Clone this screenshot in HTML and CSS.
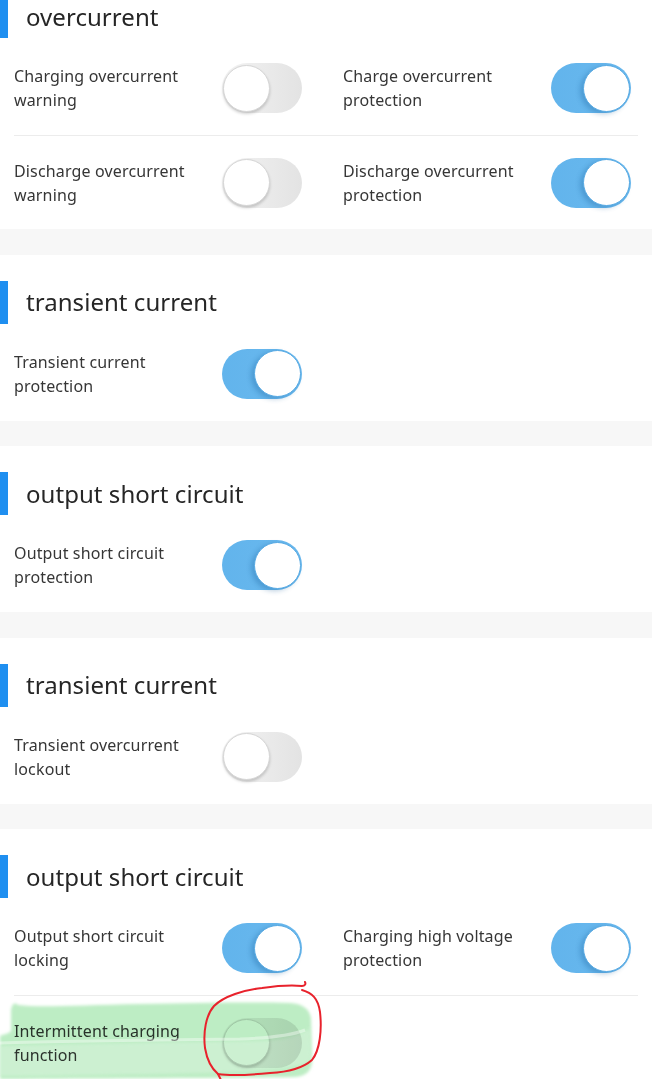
FILE: index.html
```html
<!DOCTYPE html>
<html lang="en">
<head>
<meta charset="utf-8">
<title>Protection settings</title>
<link rel="stylesheet" href="styles.css">
</head>
<body>
<main class="page">
  <section class="section">
    <div class="head"><span class="bar"></span><h2 class="title">overcurrent</h2></div>
    <div class="row">
      <div class="cell"><span class="label">Charging overcurrent warning</span><span class="switch off"><span class="knob"></span></span></div>
      <div class="cell"><span class="label">Charge overcurrent protection</span><span class="switch on"><span class="knob"></span></span></div>
    </div>
    <div class="row">
      <div class="cell"><span class="label">Discharge overcurrent warning</span><span class="switch off"><span class="knob"></span></span></div>
      <div class="cell"><span class="label">Discharge overcurrent protection</span><span class="switch on"><span class="knob"></span></span></div>
    </div>
  </section>

  <section class="section">
    <div class="head"><span class="bar"></span><h2 class="title">transient current</h2></div>
    <div class="row">
      <div class="cell"><span class="label">Transient current protection</span><span class="switch on"><span class="knob"></span></span></div>
    </div>
  </section>

  <section class="section">
    <div class="head"><span class="bar"></span><h2 class="title">output short circuit</h2></div>
    <div class="row">
      <div class="cell"><span class="label">Output short circuit protection</span><span class="switch on"><span class="knob"></span></span></div>
    </div>
  </section>

  <section class="section">
    <div class="head"><span class="bar"></span><h2 class="title">transient current</h2></div>
    <div class="row">
      <div class="cell"><span class="label">Transient overcurrent lockout</span><span class="switch off"><span class="knob"></span></span></div>
    </div>
  </section>

  <section class="section">
    <div class="head"><span class="bar"></span><h2 class="title">output short circuit</h2></div>
    <div class="row">
      <div class="cell"><span class="label">Output short circuit locking</span><span class="switch on"><span class="knob"></span></span></div>
      <div class="cell"><span class="label">Charging high voltage protection</span><span class="switch on"><span class="knob"></span></span></div>
    </div>
    <div class="row">
      <div class="cell"><span class="label">Intermittent charging function</span><span class="switch off"><span class="knob"></span></span></div>
    </div>
  </section>
</main>

<svg class="annot highlight" width="652" height="1079" viewBox="0 0 652 1079" aria-hidden="true">
  <defs>
    <filter id="soft" x="-5%" y="-20%" width="110%" height="140%">
      <feGaussianBlur stdDeviation="1.6"/>
    </filter>
  </defs>
  <path class="marker" filter="url(#soft)" d="M0 1079 L0 1036 C4 1034 9 1034 11 1031 L11 1010 C12 1004 14 1002 18 1005 C40 1008 80 1005 140 1004 C200 1003 250 1002 290 1003 C302 1004 309 1008 311 1018 L312 1062 C311 1072 305 1076 295 1077 C230 1078 120 1078 0 1079 Z"/>
  <path class="marker2" filter="url(#soft)" d="M0 1046 C80 1044 180 1042 260 1041 C285 1040 300 1036 310 1028 L311 1060 C300 1070 250 1072 150 1074 C80 1075 30 1076 0 1076 Z"/>
</svg>
<svg class="annot" width="652" height="1079" viewBox="0 0 652 1079" aria-hidden="true">
  <path class="streak" d="M0 1043 C60 1041 150 1040 240 1039 C270 1038 290 1036 305 1030"/>
  <path class="ring" d="M302 990 C312 993 318 998 320 1012 C322 1030 320 1050 312 1060 C303 1068 290 1072 270 1073 C250 1075 230 1076 218 1074 C211 1068 207 1060 205 1048 C203 1032 206 1015 214 1006 C224 996 244 990 262 988 C276 986 292 985 302 986 C305 986 306 984 305 982"/>
  <path class="ring" d="M218 1074 C219 1076 220 1078 221 1080"/>
</svg>
</body>
</html>
```

FILE: styles.css
```css
* {
  box-sizing: border-box;
}

html, body {
  margin: 0;
  padding: 0;
}

body {
  position: relative;
  width: 652px;
  height: 1079px;
  overflow: hidden;
  background: #f7f7f7;
  font-family: "Noto Sans", "Liberation Sans", sans-serif;
  color: #333333;
}

.page {
  margin-top: -31px;
}

.section {
  background: #ffffff;
  margin-bottom: 25.5px;
}

.head {
  display: flex;
  align-items: center;
  padding-top: 26px;
  padding-bottom: 3px;
}

.bar {
  display: block;
  width: 8px;
  height: 43px;
  background: #1f8ff0;
  flex: none;
}

.title {
  margin: 0 0 0 18px;
  font-size: 24px;
  font-weight: 400;
  line-height: 32px;
  color: #262626;
  letter-spacing: 0.05px;
}

.row {
  display: grid;
  grid-template-columns: 329px 1fr;
  height: 94px;
  margin: 0 14px;
}

.row + .row {
  border-top: 1px solid #ececec;
}

.cell {
  display: flex;
  align-items: center;
}

.label {
  width: 208px;
  flex: none;
  font-size: 16px;
  line-height: 24px;
  letter-spacing: 0.15px;
  color: #363636;
}

.switch {
  display: flex;
  align-items: center;
  width: 80px;
  height: 50px;
  border-radius: 25px;
  padding: 1px;
  flex: none;
}

.switch.off {
  justify-content: flex-start;
  background: linear-gradient(to right, #f3f3f3, #e3e3e3);
}

.switch.on {
  justify-content: flex-end;
  background: linear-gradient(to right, #62b4ec, #6ab9ee);
}

.knob {
  display: block;
  width: 47px;
  height: 47px;
  border-radius: 50%;
  background: #ffffff;
}

.switch.off .knob {
  border: 1px solid #d6d6d6;
  box-shadow: 0 2px 3px rgba(0, 0, 0, 0.18);
}

.switch.on .knob {
  border: 1px solid #56a9e3;
  box-shadow: -3px 2px 5px rgba(20, 90, 150, 0.3);
}

.annot {
  position: absolute;
  top: 0;
  left: 0;
  pointer-events: none;
}

.highlight {
  mix-blend-mode: multiply;
}

.marker {
  fill: #bdedc4;
}

.marker2 {
  fill: #d6f3da;
  opacity: 0.6;
}

.streak {
  fill: none;
  stroke: rgba(255, 255, 255, 0.4);
  stroke-width: 3;
}

.ring {
  fill: none;
  stroke: #e8222c;
  stroke-width: 2;
  stroke-linecap: round;
  stroke-linejoin: round;
}
```
